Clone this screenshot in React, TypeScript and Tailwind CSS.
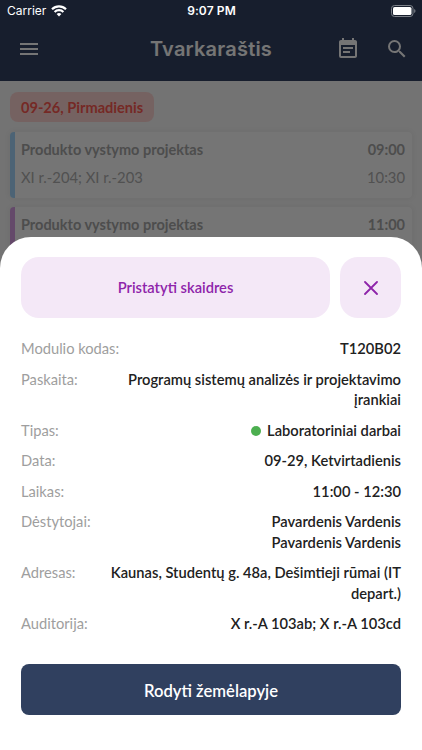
import { Fragment } from 'react';
import { MdEventNote, MdMenu, MdSearch } from 'react-icons/md';

const lectures = [
  { title: 'Produkto vystymo projektas', rooms: 'XI r.-204; XI r.-203', from: '09:00', to: '10:30', bar: 'bg-[#a6d8ff]' },
  { title: 'Produkto vystymo projektas', rooms: 'XI r.-204; XI r.-203', from: '11:00', to: '12:30', bar: 'bg-[#d9a0e8]' },
];

const details = [
  { label: 'Modulio kodas:', lines: ['T120B02'] },
  { label: 'Paskaita:', lines: ['Programų sistemų analizės ir projektavimo', 'įrankiai'] },
  { label: 'Tipas:', lines: ['Laboratoriniai darbai'], dot: true },
  { label: 'Data:', lines: ['09-29, Ketvirtadienis'] },
  { label: 'Laikas:', lines: ['11:00 - 12:30'] },
  { label: 'Dėstytojai:', lines: ['Pavardenis Vardenis', 'Pavardenis Vardenis'] },
  { label: 'Adresas:', lines: ['Kaunas, Studentų g. 48a, Dešimtieji rūmai (IT', 'depart.)'] },
  { label: 'Auditorija:', lines: ['X r.-A 103ab; X r.-A 103cd'] },
];

function StatusBar() {
  return (
    <div className="absolute inset-x-0 top-0 grid h-[22px] grid-cols-3 items-center pl-[7px] pr-[6px] font-['Inter',sans-serif] text-white">
      <div className="flex items-center gap-[5px] text-[12px]">
        Carrier
        <svg width="16" height="12" viewBox="0 0 16 12" fill="none" stroke="currentColor" strokeWidth="2.2">
          <path d="M1 4.3a10 10 0 0 1 14 0" />
          <path d="M3.6 7a6.3 6.3 0 0 1 8.8 0" />
          <path d="M8 11.6 5.6 9.1a3.5 3.5 0 0 1 4.8 0z" fill="currentColor" stroke="none" />
        </svg>
      </div>
      <span className="text-center text-[12px] font-semibold tracking-[0.1px]">9:07 PM</span>
      <svg className="justify-self-end" width="25" height="12" viewBox="0 0 25 12">
        <rect x="0.5" y="0.5" width="21.5" height="11" rx="3" fill="none" stroke="#7b8088" />
        <rect x="2" y="2" width="18.5" height="8" rx="1.6" fill="#fff" />
        <path d="M23.2 4v4a2.2 2.2 0 0 0 0-4z" fill="#7b8088" />
      </svg>
    </div>
  );
}

function Schedule() {
  return (
    <div className="h-full bg-[#fafafa]">
      <header className="flex h-[81px] items-center bg-[#334362] pl-[17px] pr-[13px] pt-[17px] text-white">
        <div className="w-[80px]">
          <MdMenu className="size-[24px]" />
        </div>
        <h1 className="flex-1 text-center font-['Inter',sans-serif] text-[20px] font-semibold tracking-[0.2px]">Tvarkaraštis</h1>
        <div className="flex w-[84px] justify-end gap-[25px]">
          <MdEventNote className="size-[24px]" />
          <MdSearch className="size-[24px]" />
        </div>
      </header>
      <div className="px-[10px] pt-[11px]">
        <div className="flex h-[30px] w-fit items-center rounded-[8px] bg-[#ffd6d4] px-[11px] pt-[2px] text-[14.6px] font-bold text-[#ff5a52]">
          09-26, Pirmadienis
        </div>
        <div className="mt-[10px] flex flex-col gap-[9px]">
          {lectures.map((lecture) => (
            <div key={lecture.from} className="flex h-[66px] overflow-hidden rounded-[4px] bg-white shadow-[0_0_6px_rgba(0,0,0,0.07)]">
              <div className={`w-[5px] ${lecture.bar}`} />
              <div className="flex flex-1 flex-col gap-[7px] pl-[6px] pr-[7px] pt-[8px] text-[14.8px] leading-[20px] text-[#b0b0b0]">
                <div className="flex justify-between text-[14.5px] font-bold text-[#a8a8a8]">
                  <span>{lecture.title}</span>
                  <span>{lecture.from}</span>
                </div>
                <div className="flex justify-between">
                  <span>{lecture.rooms}</span>
                  <span>{lecture.to}</span>
                </div>
              </div>
            </div>
          ))}
        </div>
      </div>
    </div>
  );
}

function LectureSheet() {
  return (
    <div className="absolute inset-x-0 bottom-0 h-[513px] rounded-t-[31px] bg-white px-[21px] pt-[20px]">
      <div className="flex gap-[10px] text-[#8e24aa]">
        <button className="h-[61px] flex-1 rounded-[18px] bg-[#f4e8f7] text-[14.7px] font-semibold">Pristatyti skaidres</button>
        <button className="flex size-[61px] items-center justify-center rounded-[18px] bg-[#f4e8f7]">
          <svg width="14" height="14" viewBox="0 0 14 14" stroke="currentColor" strokeWidth="1.8" strokeLinecap="round">
            <path d="M1 1l12 12M13 1L1 13" />
          </svg>
        </button>
      </div>
      <dl className="mt-[20px] flex flex-col gap-[10.2px] text-[14.7px] leading-[20.4px]">
        {details.map(({ label, lines, dot }) => (
          <div key={label} className="flex justify-between">
            <dt className="text-[#9e9e9e]">{label}</dt>
            <dd className="text-right font-semibold text-[#212121]">
              {dot && <span className="mr-[6px] inline-block size-[10px] rounded-full bg-[#4caf50]" />}
              {lines.map((line, i) => (
                <Fragment key={i}>
                  {i > 0 && <br />}
                  {line}
                </Fragment>
              ))}
            </dd>
          </div>
        ))}
      </dl>
      <button className="mt-[30px] h-[51px] w-full rounded-[8px] bg-[#30405f] pt-[5px] text-[16.6px] font-semibold text-white">
        Rodyti žemėlapyje
      </button>
    </div>
  );
}

export default function App() {
  return (
    <div className="relative h-[750px] w-[422px] overflow-hidden font-['Lato',sans-serif]">
      <Schedule />
      <div className="absolute inset-0 bg-black/54" />
      <StatusBar />
      <LectureSheet />
    </div>
  );
}
